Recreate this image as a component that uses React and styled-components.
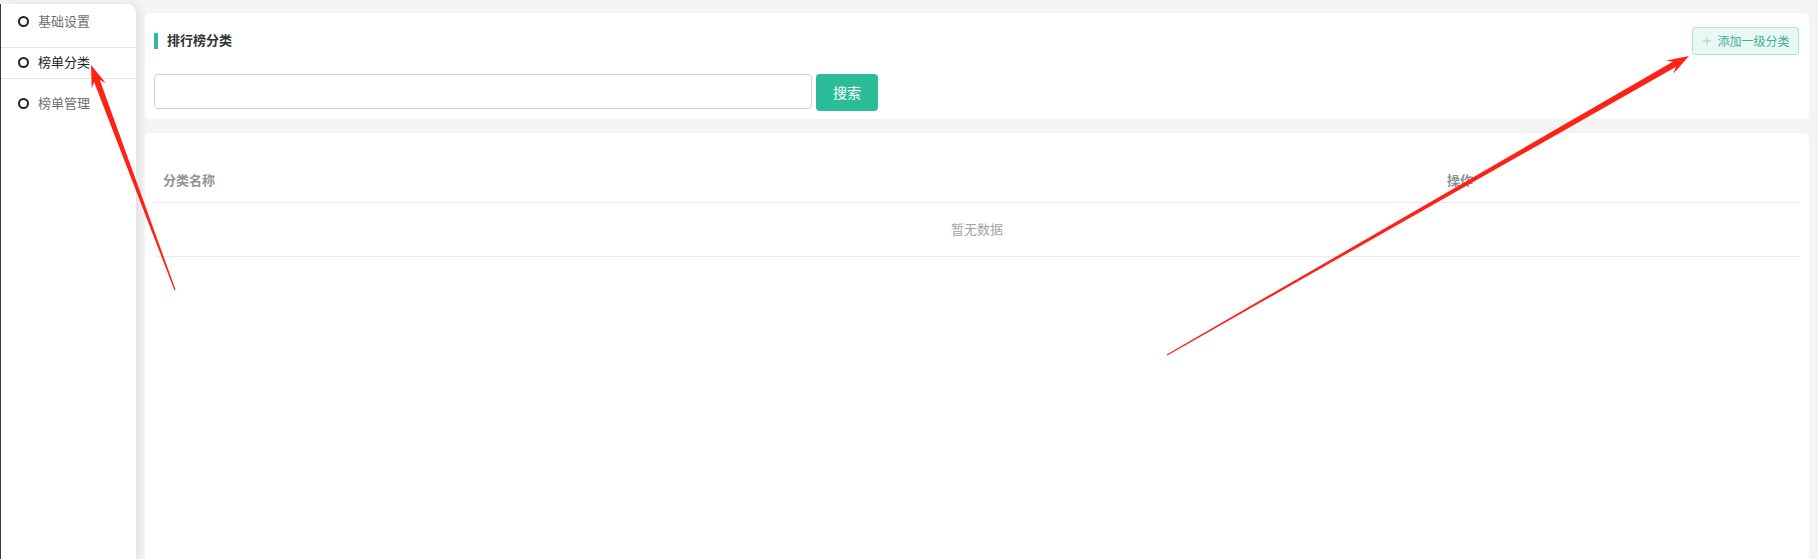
import React from "react";
import styled, { createGlobalStyle } from "styled-components";
import { Plus } from "lucide-react";

const GlobalStyle = createGlobalStyle`
  html, body {
    margin: 0;
    padding: 0;
    background: #f4f4f4;
    overflow: hidden;
  }
  body {
    font-family: "Noto Sans CJK SC", "Noto Sans", sans-serif;
    color: #303133;
  }
  * { box-sizing: border-box; }
`;

const menu = [
  { label: "基础设置" },
  { label: "榜单分类", active: true },
  { label: "榜单管理" },
];

// annotation arrows drawn over the screenshot
const arrows = [
  { from: [175, 290], to: [91, 65] },
  { from: [1167, 355], to: [1689, 56] },
];

const arrowPoints = ({ from, to }) => {
  const [x0, y0] = from;
  const [x1, y1] = to;
  const dx = x1 - x0;
  const dy = y1 - y0;
  const len = Math.hypot(dx, dy);
  const ux = dx / len;
  const uy = dy / len;
  const nx = -uy;
  const ny = ux;
  const head = 22;
  const bx = x1 - ux * head;
  const by = y1 - uy * head;
  const nbx = x1 - ux * (head - 5);
  const nby = y1 - uy * (head - 5);
  const p = (x, y, w) => [x + nx * w, y + ny * w];
  const pts = [
    p(x0, y0, 0.6),
    p(nbx, nby, 3),
    p(bx, by, 7.5),
    [x1, y1],
    p(bx, by, -7.5),
    p(nbx, nby, -3),
    p(x0, y0, -0.6),
  ];
  return pts.map(([a, b]) => `${a.toFixed(1)},${b.toFixed(1)}`).join(" ");
};

const App = () => {
  return (
    <Page>
      <GlobalStyle />
      <Sidebar>
        {menu.map((m) => (
          <MenuItem key={m.label} $active={m.active}>
            <Dot />
            {m.label}
          </MenuItem>
        ))}
      </Sidebar>
      <Main>
        <Card $pad="14px 10px 8px 9px">
          <TitleRow>
            <Title>排行榜分类</Title>
            <AddButton>
              <Plus size={12} strokeWidth={1.5} color="#9bb8b0" />
              添加一级分类
            </AddButton>
          </TitleRow>
          <SearchRow>
            <SearchInput />
            <SearchButton>搜索</SearchButton>
          </SearchRow>
        </Card>
        <Card $pad="25px 9px 0 9px" $grow>
          <Table>
            <HeadCell>分类名称</HeadCell>
            <HeadCell>操作</HeadCell>
            <Empty>暂无数据</Empty>
          </Table>
        </Card>
      </Main>
      <Overlay width="1818" height="559">
        {arrows.map((a, i) => (
          <polygon key={i} points={arrowPoints(a)} fill="#ff2116" />
        ))}
      </Overlay>
    </Page>
  );
};

const Page = styled.div`
  position: relative;
  display: flex;
  height: 100vh;
`;

const Sidebar = styled.nav`
  width: 136px;
  flex-shrink: 0;
  margin-top: 4px;
  padding-top: 2px;
  background: #fff;
  border-left: 1px solid #3a3a3a;
  border-top-right-radius: 9px;
  box-shadow: 4px 0 8px rgba(0, 0, 0, 0.08);
  display: flex;
  flex-direction: column;
  gap: 9px;
  position: relative;
  z-index: 1;
`;

const MenuItem = styled.div`
  height: 32px;
  display: flex;
  align-items: center;
  gap: 9px;
  padding-left: 17px;
  padding-bottom: 4px;
  font-size: 13px;
  color: ${(p) => (p.$active ? "#222" : "#6f6f6f")};
  border-top: 1px solid ${(p) => (p.$active ? "#e6e6e6" : "transparent")};
  border-bottom: 1px solid ${(p) => (p.$active ? "#e6e6e6" : "transparent")};
`;

const Dot = styled.span`
  width: 11px;
  height: 11px;
  margin-top: 2px;
  border-radius: 50%;
  border: 2px solid #222;
  flex-shrink: 0;
`;

const Main = styled.main`
  flex: 1;
  display: flex;
  flex-direction: column;
  gap: 14px;
  padding: 13px 9px 0 9px;
  min-width: 0;
`;

const Card = styled.section`
  background: #fff;
  border-radius: ${(p) => (p.$grow ? "5px 5px 0 0" : "5px")};
  padding: ${(p) => p.$pad};
  flex: ${(p) => (p.$grow ? 1 : "none")};
`;

const TitleRow = styled.div`
  display: flex;
  align-items: center;
  justify-content: space-between;
  height: 28px;
`;

const Title = styled.h2`
  margin: 0;
  padding-left: 9px;
  padding-bottom: 3px;
  border-left: 4px solid #2bbc9a;
  height: 16px;
  line-height: 13px;
  font-size: 13px;
  font-weight: 700;
  color: #303133;
`;

const AddButton = styled.button`
  width: 107px;
  height: 28px;
  display: flex;
  align-items: center;
  justify-content: center;
  gap: 4px;
  background: #e9f8f4;
  border: 1px solid #a9e4d5;
  border-radius: 3px;
  color: #3db095;
  font-family: inherit;
  font-size: 12px;
  padding: 0 0 1px;
`;

const SearchRow = styled.div`
  display: flex;
  align-items: flex-start;
  gap: 4px;
  margin-top: 19px;
`;

const SearchInput = styled.input`
  width: 658px;
  height: 35px;
  border: 1px solid #cfcfdc;
  border-radius: 4px;
  outline: none;
`;

const SearchButton = styled.button`
  width: 62px;
  height: 37px;
  background: #2bbc9a;
  color: #fff;
  border: none;
  border-radius: 4px;
  font-family: inherit;
  font-size: 14px;
  padding: 0 0 2px;
`;

const Table = styled.div`
  display: grid;
  grid-template-columns: 1fr 362px;
`;

const HeadCell = styled.div`
  height: 45px;
  display: flex;
  align-items: center;
  padding-left: 9px;
  padding-bottom: 2px;
  font-size: 13px;
  font-weight: 700;
  color: #909399;
  border-bottom: 1px solid #ebebf3;
`;

const Empty = styled.div`
  grid-column: 1 / -1;
  height: 54px;
  display: flex;
  align-items: center;
  justify-content: center;
  padding-bottom: 2px;
  font-size: 13px;
  color: #a0a3ab;
  border-bottom: 1px solid #ebebf3;
`;

const Overlay = styled.svg`
  position: absolute;
  left: 0;
  top: 0;
  pointer-events: none;
  z-index: 5;
`;

export default App;
